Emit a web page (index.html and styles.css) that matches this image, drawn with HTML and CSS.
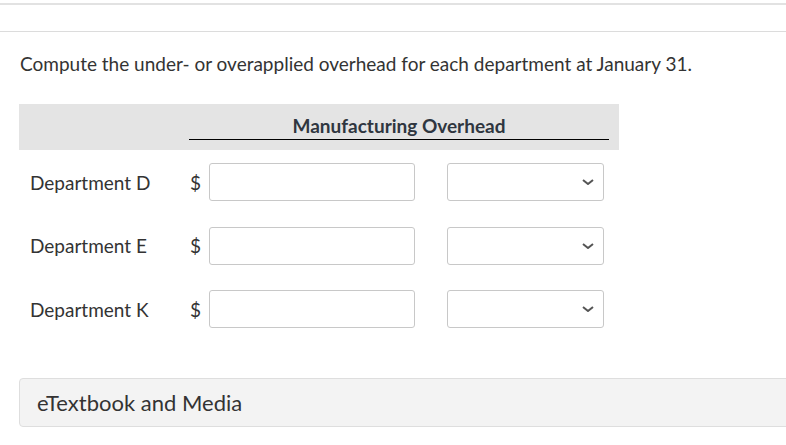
FILE: index.html
```html
<!DOCTYPE html>
<html lang="en">
<head>
  <meta charset="UTF-8">
  <title>Manufacturing Overhead</title>
  <link rel="stylesheet" href="styles.css">
</head>
<body>
  <div class="top-bar"></div>

  <p class="question">Compute the under- or overapplied overhead for each department at January 31.</p>

  <div class="overhead-table">
    <div class="table-head">
      <div class="head-title">Manufacturing Overhead</div>
    </div>

    <div class="table-row">
      <span class="dept">Department D</span>
      <span class="dollar">$</span>
      <input type="text" class="amount">
      <div class="select-box"><svg class="chevron" viewBox="0 0 12 6"><path d="M1 1 L6 5 L11 1" /></svg></div>
    </div>

    <div class="table-row">
      <span class="dept">Department E</span>
      <span class="dollar">$</span>
      <input type="text" class="amount">
      <div class="select-box"><svg class="chevron" viewBox="0 0 12 6"><path d="M1 1 L6 5 L11 1" /></svg></div>
    </div>

    <div class="table-row">
      <span class="dept">Department K</span>
      <span class="dollar">$</span>
      <input type="text" class="amount">
      <div class="select-box"><svg class="chevron" viewBox="0 0 12 6"><path d="M1 1 L6 5 L11 1" /></svg></div>
    </div>
  </div>

  <div class="media-box">eTextbook and Media</div>
</body>
</html>
```

FILE: styles.css
```css
body {
  font-family: Lato, "Open Sans", sans-serif;
  color: #333;
  background-color: #fff;
  margin: 0;
  padding: 0;
  overflow: hidden;
}

.top-bar {
  margin-top: 3px;
  height: 26px;
  border-top: 2px solid #e2e2e2;
  border-bottom: 1px solid #dcdcdc;
}

.question {
  margin: 20px 0 0 20px;
  font-size: 19px;
  line-height: 24px;
}

.overhead-table {
  margin: 28px 0 0 19px;
  width: 600px;
  display: flex;
  flex-direction: column;
  gap: 25.5px;
}

.table-head {
  background-color: #e4e4e4;
  height: 46px;
  padding: 0 10px 0 170px;
  margin-bottom: -12.5px;
}

.head-title {
  font-weight: bold;
  font-size: 19px;
  line-height: 22px;
  text-align: center;
  padding-top: 11px;
  height: 24px;
  color: #2f3640;
  border-bottom: 1px solid #000;
}

.table-row {
  display: grid;
  grid-template-columns: 171px 19px 206px 157px;
  align-items: center;
  height: 38px;
}

.dept {
  padding-left: 11px;
  font-size: 19px;
}

.dollar {
  font-size: 19px;
}

.amount {
  box-sizing: border-box;
  height: 38px;
  width: 206px;
  border: 1px solid #c8c8c8;
  border-radius: 3px;
  margin: 0;
}

.select-box {
  box-sizing: border-box;
  height: 38px;
  width: 157px;
  margin-left: 32px;
  border: 1px solid #c8c8c8;
  border-radius: 3px;
  position: relative;
}

.chevron {
  position: absolute;
  right: 9px;
  top: 15px;
  width: 12px;
  height: 6px;
  fill: none;
  stroke: #555;
  stroke-width: 2;
}

.media-box {
  margin: 50px -20px 0 19px;
  height: 47px;
  line-height: 47px;
  padding-left: 17px;
  background-color: #f3f3f3;
  border: 1px solid #dedede;
  border-radius: 4px;
  font-size: 22px;
}
```
